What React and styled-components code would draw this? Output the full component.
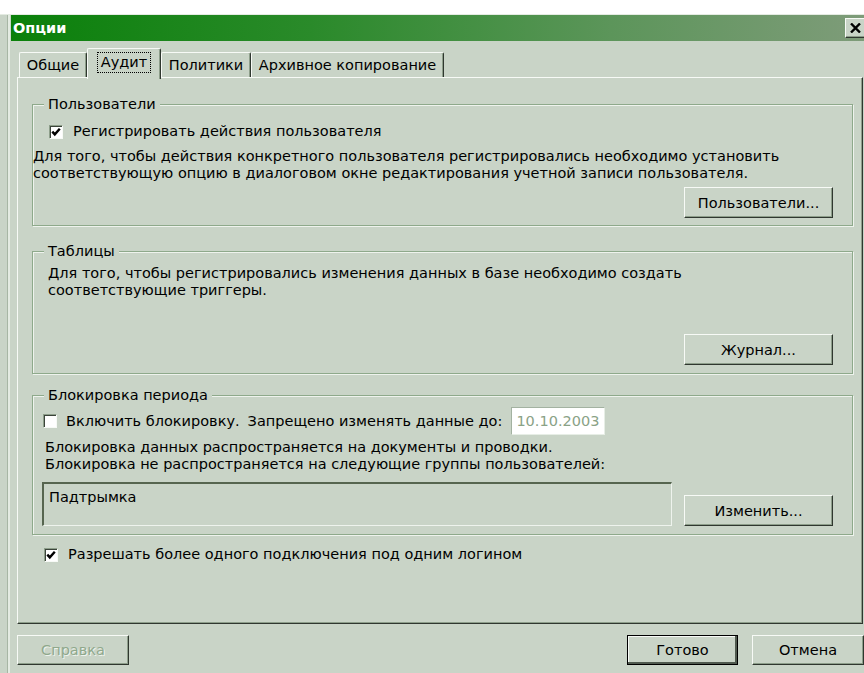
import styled, { createGlobalStyle, css } from "styled-components";

const GlobalStyle = createGlobalStyle`
  html, body {
    margin: 0;
    padding: 0;
    background: #ffffff;
    overflow: hidden;
  }
  body {
    width: 864px;
    height: 673px;
    font-family: "DejaVu Sans", Verdana, sans-serif;
    font-size: 14.5px;
    color: #000;
  }
`;

const FACE = "#c9d4c7";
const ETCH = "#8ea98b";

const raised = css`
  border-top: 1px solid #f7faf6;
  border-left: 1px solid #f7faf6;
  border-right: 1px solid #2f372f;
  border-bottom: 1px solid #2f372f;
  box-shadow: inset -1px -1px 0 #8d9e8a;
`;

const sunken = css`
  border-top: 1px solid #8d9e8a;
  border-left: 1px solid #8d9e8a;
  border-right: 1px solid #f7faf6;
  border-bottom: 1px solid #f7faf6;
  box-shadow: inset 1px 1px 0 #3b443a;
`;

function App() {
  return (
    <>
      <GlobalStyle />
      <Frame>
        <TitleBar>
          <Caption>Опции</Caption>
          <CloseButton aria-label="close">
            <svg width="11" height="10" viewBox="0 0 11 10">
              <path d="M1 0.5 L10 9.5 M10 0.5 L1 9.5" stroke="#000" strokeWidth="2.4" />
            </svg>
          </CloseButton>
        </TitleBar>

        <Body>
          <TabStrip>
            <Tab $w={68}>Общие</Tab>
            <Tab $w={74} $active>
              <Focus>Аудит</Focus>
            </Tab>
            <Tab $w={90}>Политики</Tab>
            <Tab $w={193}>Архивное копирование</Tab>
          </TabStrip>

          <Panel>
            <Group>
              <Legend>Пользователи</Legend>
              <CheckRow $indent={16} $top={10}>
                <CheckBox checked />
                <Label>Регистрировать действия пользователя</Label>
              </CheckRow>
              <Note $indent={0} $top={8}>
                Для того, чтобы действия конкретного пользователя регистрировались необходимо установить
                <br />
                соответствующую опцию в диалоговом окне редактирования учетной записи пользователя.
              </Note>
              <ButtonRow $top={5} $bottom={7}>
                <Button $w={149}>Пользователи...</Button>
              </ButtonRow>
            </Group>

            <Group $top={17}>
              <Legend>Таблицы</Legend>
              <Note $indent={15} $top={5}>
                Для того, чтобы регистрировались изменения данных в базе необходимо создать
                <br />
                соответствующие триггеры.
              </Note>
              <ButtonRow $top={35} $bottom={8}>
                <Button $w={149}>Журнал...</Button>
              </ButtonRow>
            </Group>

            <Group $top={13}>
              <Legend>Блокировка периода</Legend>
              <CheckRow $indent={10} $top={3}>
                <CheckBox />
                <Label $gap={9}>Включить блокировку.</Label>
                <Label $gap={8}>Запрещено изменять данные до:</Label>
                <DateField>10.10.2003</DateField>
              </CheckRow>
              <Note $indent={12} $top={4}>
                Блокировка данных распространяется на документы и проводки.
                <br />
                Блокировка не распространяется на следующие группы пользователей:
              </Note>
              <ListRow>
                <ListBox>Падтрымка</ListBox>
                <Button $w={149}>Изменить...</Button>
              </ListRow>
            </Group>

            <CheckRow $indent={12} $top={11}>
              <CheckBox checked />
              <Label>Разрешать более одного подключения под одним логином</Label>
            </CheckRow>
          </Panel>

          <Footer>
            <Button $w={112} $h={30} disabled>
              Справка
            </Button>
            <Spacer />
            <Button $w={111} $h={30} $default>
              Готово
            </Button>
            <Button $w={112} $h={30}>
              Отмена
            </Button>
          </Footer>
        </Body>
      </Frame>
    </>
  );
}

function CheckBox({ checked }) {
  return (
    <Box>
      {checked && (
        <svg width="10" height="10" viewBox="0 0 10 10">
          <polyline points="1.3,4.6 3.8,7.4 8.8,1.8" fill="none" stroke="#000" strokeWidth="2.4" />
        </svg>
      )}
    </Box>
  );
}

const Frame = styled.div`
  margin-top: 14px;
  width: 868px;
  height: 659px;
  box-sizing: border-box;
  padding-left: 11px;
  background: ${FACE};
  border-top: 1px solid #e4ebe2;
  box-shadow: inset 7px 0 0 ${FACE}, inset 8px 0 0 #a7b6a4, inset 10px 0 0 #e4ebe2;
`;

const TitleBar = styled.div`
  height: 26px;
  display: flex;
  align-items: center;
  justify-content: space-between;
  padding-left: 2px;
  background: linear-gradient(to right, #0a800a 0%, #2a8a2a 35%, #5c955a 70%, #7f9c7a 100%);
`;

const Caption = styled.span`
  color: #ffffff;
  font-weight: bold;
  font-size: 14.5px;
`;

const CloseButton = styled.div`
  ${raised};
  box-sizing: border-box;
  width: 23px;
  height: 20px;
  margin-right: 0;
  background: ${FACE};
  display: flex;
  align-items: center;
  justify-content: center;
  padding-right: 2px;
`;

const Body = styled.div`
  padding-left: 6px;
  width: 847px;
`;

const TabStrip = styled.div`
  display: flex;
  align-items: flex-end;
  height: 29px;
  margin-top: 7px;
  padding-left: 2px;
`;

const Tab = styled.div`
  position: relative;
  box-sizing: border-box;
  width: ${(p) => p.$w}px;
  height: ${(p) => (p.$active ? 31 : 25)}px;
  margin-bottom: ${(p) => (p.$active ? -2 : 0)}px;
  z-index: ${(p) => (p.$active ? 2 : 1)};
  display: flex;
  align-items: center;
  justify-content: center;
  padding-bottom: ${(p) => (p.$active ? 3 : 0)}px;
  background: ${FACE};
  border-top: 1px solid #f7faf6;
  border-left: 1px solid #f7faf6;
  border-right: 1px solid #2f372f;
  border-top-left-radius: 2px;
  border-top-right-radius: 2px;
  box-shadow: inset -1px 0 0 #8d9e8a;
`;

const Focus = styled.span`
  padding: 1px 3px 2px;
  outline: 1px dotted #000;
`;

const Panel = styled.div`
  box-sizing: border-box;
  width: 846px;
  height: 547px;
  padding: 18px 9px 0 14px;
  background: ${FACE};
  border-top: 1px solid #f7faf6;
  border-left: 1px solid #f7faf6;
  border-right: 1px solid #2f372f;
  border-bottom: 1px solid #2f372f;
  box-shadow: inset -1px -1px 0 #8d9e8a;
`;

const Group = styled.fieldset`
  margin: ${(p) => p.$top || 0}px 0 0;
  padding: 0;
  min-inline-size: 0;
  border: 1px solid ${ETCH};
  box-shadow: inset 1px 1px 0 #eef3ed, 1px 1px 0 #eef3ed;
`;

const Legend = styled.legend`
  margin-left: 11px;
  padding: 0 4px;
  line-height: 17px;
  background: ${FACE};
`;

const CheckRow = styled.div`
  display: flex;
  align-items: center;
  min-height: 17px;
  margin: ${(p) => p.$top}px 0 0 ${(p) => p.$indent}px;
`;

const Box = styled.span`
  box-sizing: border-box;
  width: 14px;
  height: 14px;
  flex: none;
  display: flex;
  align-items: center;
  justify-content: center;
  background: #ffffff;
  ${sunken};
`;

const Label = styled.span`
  margin-left: ${(p) => (p.$gap != null ? p.$gap : 10)}px;
  line-height: 17px;
  white-space: nowrap;
`;

const DateField = styled.span`
  box-sizing: border-box;
  width: 94px;
  height: 28px;
  margin-left: 9px;
  padding-left: 4px;
  display: flex;
  align-items: center;
  background: #ffffff;
  color: #8aa286;
  border-top: 1px solid #a3b2a1;
  border-left: 1px solid #a3b2a1;
  border-right: 1px solid #e7eee6;
  border-bottom: 1px solid #e7eee6;
`;

const Note = styled.p`
  margin: ${(p) => p.$top}px 0 0 ${(p) => p.$indent}px;
  line-height: 17px;
  white-space: nowrap;
`;

const ButtonRow = styled.div`
  display: flex;
  justify-content: flex-end;
  margin-top: ${(p) => p.$top}px;
  padding: 0 19px ${(p) => p.$bottom}px 0;
`;

const Button = styled.button`
  box-sizing: border-box;
  width: ${(p) => p.$w}px;
  height: ${(p) => p.$h || 31}px;
  padding: 0;
  font: inherit;
  color: #000;
  background: ${FACE};
  ${raised};
  ${(p) =>
    p.$default &&
    css`
      outline: 1px solid #000;
      outline-offset: -1px;
      border-right-color: #000;
      border-bottom-color: #000;
      box-shadow: inset -2px -2px 0 #505a4f, inset 1px 1px 0 #f7faf6;
    `}
  &:disabled {
    color: #8fa88c;
    text-shadow: 1px 1px 0 #eef3ed;
  }
`;

const ListRow = styled.div`
  display: flex;
  align-items: flex-end;
  gap: 12px;
  margin: 9px 0 0 9px;
  padding-bottom: 8px;
`;

const ListBox = styled.div`
  box-sizing: border-box;
  width: 630px;
  height: 44px;
  padding: 5px 0 0 5px;
  line-height: 17px;
  background: ${FACE};
  border-top: 2px solid #56654f;
  border-left: 2px solid #56654f;
  border-right: 1px solid #eef3ed;
  border-bottom: 1px solid #eef3ed;
`;

const Footer = styled.div`
  display: flex;
  align-items: center;
  gap: 14px;
  margin-top: 11px;
`;

const Spacer = styled.div`
  flex: 1;
`;

export default App;
